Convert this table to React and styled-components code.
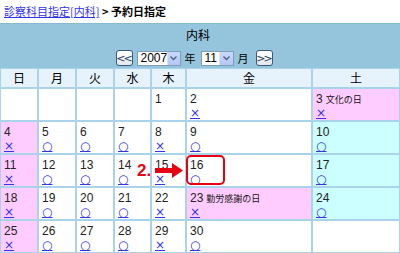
import React from "react";
import styled, { createGlobalStyle } from "styled-components";

const GlobalStyle = createGlobalStyle`
  body {
    margin: 0;
    background: #ffffff;
    font-family: "Liberation Sans", "Noto Sans CJK JP", sans-serif;
  }
`;

const Page = styled.div`
  position: relative;
  width: 400px;
  height: 253px;
  overflow: hidden;
`;

const Breadcrumb = styled.div`
  height: 23px;
  padding-left: 4px;
  font-size: 11px;
  line-height: 23px;
  color: #000;
  font-family: "Noto Sans CJK JP", sans-serif;

  a {
    color: #3333ee;
    text-decoration: underline;
  }

  b {
    font-weight: bold;
  }
`;

const Panel = styled.div`
  background: #95c5dc;
  border-top: 1px solid #86b9d2;
`;

const Title = styled.div`
  height: 22px;
  text-align: center;
  font-size: 12px;
  line-height: 22px;
  padding-right: 4px;
  font-family: "Noto Sans CJK JP", sans-serif;
`;

const Controls = styled.div`
  display: flex;
  align-items: center;
  justify-content: center;
  height: 20px;
  padding: 2px 12px 0 0;
`;

const NavButton = styled.div`
  width: 14px;
  height: 14px;
  border: 1px solid #3c5a78;
  border-radius: 3px;
  background: linear-gradient(#ffffff, #e4e8ec);
  display: flex;
  align-items: center;
  justify-content: center;
  font-size: 11px;
  letter-spacing: -2px;
  color: #2a3a5a;
  font-family: "DejaVu Sans", sans-serif;
  line-height: 1;
  padding-right: 1px;
  margin: 0 ${(p) => p.mr || 0}px 0 ${(p) => p.ml || 0}px;
`;

const Select = styled.div`
  display: flex;
  align-items: center;
  width: ${(p) => p.w}px;
  height: 15px;
  background: #fff;
  border: 1px solid #7f9db9;
  box-sizing: border-box;
  font-size: 12px;
  padding-left: 3px;
  justify-content: space-between;
`;

const SelectArrow = styled.div`
  width: 13px;
  height: 13px;
  background: linear-gradient(#c9d8fc, #b4c8f7);
  border-left: 1px solid #d6e0fb;
  display: flex;
  align-items: center;
  justify-content: center;
`;

const Unit = styled.span`
  font-size: 11px;
  font-family: "Noto Sans CJK JP", sans-serif;
  margin: 0 5px 0 4px;
`;

const Grid = styled.div`
  display: grid;
  grid-template-columns: 36px 36px 36px 35px 33px 124px 86px;
  grid-template-rows: 18px repeat(5, 31px);
  gap: 2px;
  padding: 1px;
  background: #a8d3ea;
`;

const DayHead = styled.div`
  background: #e6f2fc;
  text-align: center;
  font-size: 12px;
  line-height: 18px;
  font-family: "Noto Sans CJK JP", sans-serif;
`;

const Cell = styled.div`
  background: ${(p) =>
    p.kind === "holiday" ? "#ffccff" : p.kind === "sat" ? "#ccffff" : "#ffffff"};
  padding: 4px 0 0 3px;
  font-size: 12px;
  line-height: 13px;
  color: #222;
`;

const DayNum = styled.div`
  display: flex;
  align-items: baseline;
  gap: 3px;
`;

const HolidayName = styled.span`
  font-size: 9px;
  font-family: "Noto Sans CJK JP", sans-serif;
  color: #111;
`;

const Mark = styled.a`
  display: inline-block;
  margin-top: 1px;
  color: #3434e8;
  font-size: 12px;
  text-decoration: underline;
  font-family: "DejaVu Sans", sans-serif;
  line-height: 12px;
`;

const Highlight = styled.div`
  position: absolute;
  left: 186px;
  top: 155px;
  width: 35px;
  height: 26px;
  border: 2px solid #e60012;
  border-radius: 5px;
`;

const StepLabel = styled.div`
  position: absolute;
  left: 137px;
  top: 161px;
  color: #e60012;
  font-size: 17px;
  font-weight: bold;
  font-family: "Liberation Sans", sans-serif;
`;

const Arrow = styled.svg`
  position: absolute;
  left: 154px;
  top: 162px;
`;

const DAYS = ["日", "月", "火", "水", "木", "金", "土"];

// null = empty cell; o = 予約可, x = 不可
const WEEKS = [
  [null, null, null, null, { d: 1 }, { d: 2, m: "x" }, { d: 3, m: "x", h: "文化の日" }],
  [{ d: 4, m: "x" }, { d: 5, m: "o" }, { d: 6, m: "o" }, { d: 7, m: "o" }, { d: 8, m: "x" }, { d: 9, m: "o" }, { d: 10, m: "o" }],
  [{ d: 11, m: "x" }, { d: 12, m: "o" }, { d: 13, m: "o" }, { d: 14, m: "o" }, { d: 15, m: "x" }, { d: 16, m: "o" }, { d: 17, m: "o" }],
  [{ d: 18, m: "x" }, { d: 19, m: "o" }, { d: 20, m: "o" }, { d: 21, m: "o" }, { d: 22, m: "x" }, { d: 23, m: "x", h: "勤労感謝の日" }, { d: 24, m: "o" }],
  [{ d: 25, m: "x" }, { d: 26, m: "o" }, { d: 27, m: "o" }, { d: 28, m: "o" }, { d: 29, m: "x" }, { d: 30, m: "o" }, null],
];

const cellKind = (day, col) => {
  if (!day) return "plain";
  if (col === 0 || day.h) return "holiday";
  if (col === 6) return "sat";
  return "plain";
};

const Chevron = () => (
  <svg width="7" height="5" viewBox="0 0 7 5">
    <path d="M0.5 0.5 L3.5 3.5 L6.5 0.5" stroke="#4d6185" strokeWidth="1.4" fill="none" />
  </svg>
);

const App = () => {
  return (
    <Page>
      <GlobalStyle />
      <Breadcrumb>
        <a href="#">診察科目指定[内科]</a> <b>&gt; 予約日指定</b>
      </Breadcrumb>
      <Panel>
        <Title>内科</Title>
        <Controls>
          <NavButton mr={4}>&lt;&lt;</NavButton>
          <Select w={44}>
            2007
            <SelectArrow>
              <Chevron />
            </SelectArrow>
          </Select>
          <Unit>年</Unit>
          <Select w={33}>
            11
            <SelectArrow>
              <Chevron />
            </SelectArrow>
          </Select>
          <Unit>月</Unit>
          <NavButton ml={2}>&gt;&gt;</NavButton>
        </Controls>
        <Grid>
          {DAYS.map((d) => (
            <DayHead key={d}>{d}</DayHead>
          ))}
          {WEEKS.map((week, wi) =>
            week.map((day, ci) => (
              <Cell key={`${wi}-${ci}`} kind={cellKind(day, ci)}>
                {day && (
                  <>
                    <DayNum>
                      {day.d}
                      {day.h && <HolidayName>{day.h}</HolidayName>}
                    </DayNum>
                    {day.m && <Mark href="#">{day.m === "o" ? "○" : "×"}</Mark>}
                  </>
                )}
              </Cell>
            ))
          )}
        </Grid>
      </Panel>

      <Highlight />
      <StepLabel>2.</StepLabel>
      <Arrow width="30" height="17" viewBox="0 0 30 17">
        <polygon points="1,6 18,6 18,1 29,8.5 18,16 18,11 1,11" fill="#e60012" />
      </Arrow>
    </Page>
  );
};

export default App;
